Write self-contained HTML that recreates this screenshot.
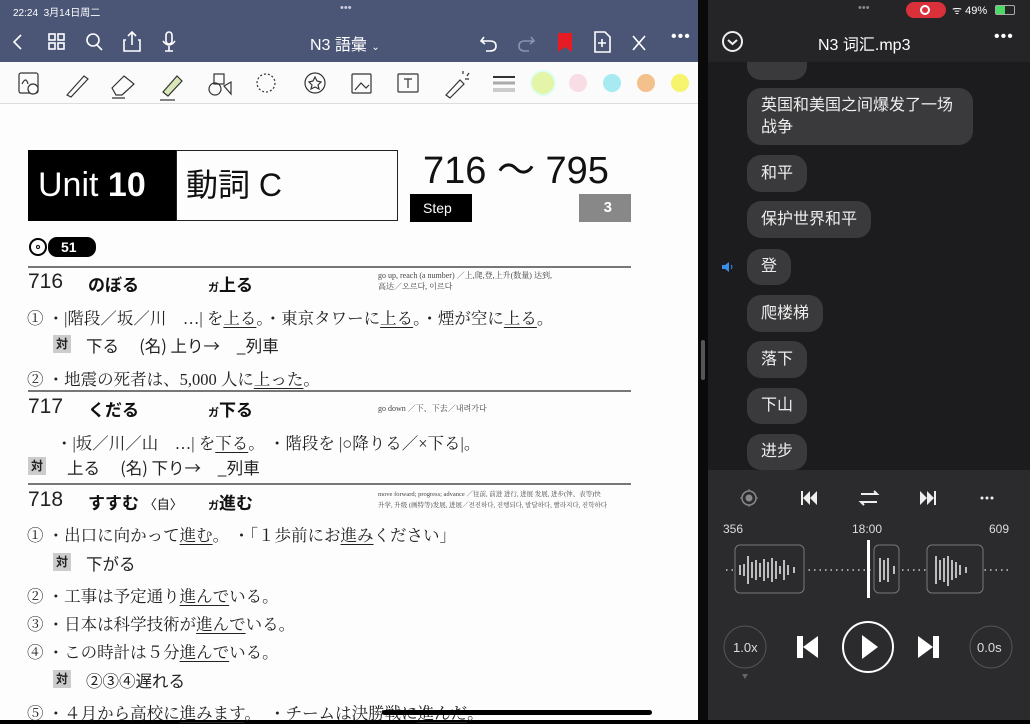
<!DOCTYPE html><html><head><meta charset="utf-8"><style>
*{margin:0;padding:0;box-sizing:border-box}
body{width:1030px;height:720px;overflow:hidden;position:relative;background:#000;font-family:"Liberation Sans","Noto Sans CJK SC",sans-serif}
.a{position:absolute;white-space:nowrap}
.jp{font-family:"Liberation Serif","Noto Serif CJK SC",serif;color:#222;font-size:16.5px}
.bj{font-family:"Liberation Sans","Noto Sans CJK JP",sans-serif;font-weight:bold;font-size:17px;color:#111}
.num{font-family:"Liberation Sans",sans-serif;font-size:21px;color:#222}
.tai{background:#ccc;font-family:"Noto Sans CJK JP",sans-serif;font-weight:bold;font-size:12px;width:18px;height:18px;text-align:center;line-height:18px;color:#222}
.rule{position:absolute;left:28px;width:603px;height:2px;background:#777}
.small{font-family:"Liberation Serif","Noto Serif CJK SC",serif;font-size:8px;color:#444;line-height:11px}
.b{position:absolute;left:747px;background:#3a3a3c;border-radius:14px;color:#eee;font-size:16px;padding:0 14px;line-height:22px}
u{text-decoration:underline;text-underline-offset:3px}
</style></head><body>
<div class="a" style="left:0;top:0;width:698px;height:62px;background:#4b5677"></div>
<div class="a" style="left:13px;top:4px;color:#fff;font-size:10px">22:24&nbsp; 3月14日周二</div>
<div class="a" style="left:340px;top:2px;color:#ccd;font-size:11px">•••</div>
<svg class="a" style="left:0;top:28px" width="698" height="28" stroke="#fff" fill="none" stroke-width="1.6">
<path d="M21 7 L14 14 L21 21"/>
<rect x="49" y="6" width="6" height="6"/><rect x="58" y="6" width="6" height="6"/><rect x="49" y="15" width="6" height="6"/><rect x="58" y="15" width="6" height="6"/>
<circle cx="93" cy="12" r="6"/><path d="M97 17 L102 22"/>
<path d="M126 12 H124 V23 H140 V12 H138 M132 17 V4 M128 8 L132 4 L136 8"/>
<rect x="166" y="4" width="6" height="12" rx="3"/><path d="M163 13 Q169 21 175 13 M169 18 V23 M165 23 H173"/>
<path d="M484 9 L481 13 L485 16 M481 13 H490 Q496 13 496 18 Q496 23 490 23 H486"/>
<path d="M531 9 L534 13 L530 16 M534 13 H525 Q519 13 519 18 Q519 23 525 23 H529" stroke="#8a93ad"/>
<path d="M558 5 H572 V24 L565 19 L558 24 Z" fill="#e51c23" stroke="none"/>
<path d="M595 4 H605 L610 9 V24 H595 Z M602 11 V19 M598 15 H606"/>
<path d="M633 8 L645 22 M645 8 L633 22"/>
</svg>
<div class="a" style="left:671px;top:28px;color:#fff;font-size:16px;letter-spacing:1px">•••</div>
<div class="a" style="left:310px;top:31px;color:#fff;font-size:16px;font-family:'Liberation Sans','Noto Sans CJK JP',sans-serif">N3 語彙 <span style="font-size:10px">⌄</span></div>
<div class="a" style="left:0;top:62px;width:698px;height:42px;background:#fbfbfb;border-bottom:1px solid #ddd"></div>
<svg class="a" style="left:0;top:62px" width="698" height="42" stroke="#333" fill="none" stroke-width="1.2">
<rect x="19" y="11" width="19" height="20" rx="2"/><circle cx="33" cy="27" r="5" fill="#fff"/><path d="M22 22 Q26 14 28 22"/>
<path d="M67 33 L84 14 L88 17 L71 35 Z"/>
<path d="M112 26 L124 14 L134 22 L122 33 H116 Z M112 36 H125"/>
<path d="M163 30 L177 14 L182 19 L168 34 Z" fill="#d8e8b8"/><path d="M160 38 H175"/>
<rect x="214" y="12" width="10" height="10"/><circle cx="215" cy="27" r="6"/><path d="M224 24 L231 20 V32 Z"/>
<circle cx="266" cy="21" r="9" stroke-dasharray="2 2"/>
<circle cx="315" cy="21" r="10"/><path d="M315 15 L317 19 L321 20 L318 23 L319 27 L315 25 L311 27 L312 23 L309 20 L313 19 Z"/>
<rect x="352" y="12" width="19" height="19" rx="1"/><path d="M355 28 L361 21 L366 26 L369 23"/>
<rect x="398" y="12" width="20" height="18" rx="1"/><path d="M404 17 H412 M408 17 V26"/>
<path d="M446 33 L460 18 L464 22 L450 36 Z"/><path d="M463 12 V9 M467 14 L469 11 M465 17 H469"/>
<path d="M493 15 H515" stroke="#333" stroke-width="2"/><path d="M493 21 H515" stroke="#aaa" stroke-width="3"/><path d="M493 28 H515" stroke="#ccc" stroke-width="4"/>
</svg>
<div class="a" style="left:532px;top:72px;width:22px;height:22px;border-radius:50%;background:#e4f4a8;box-shadow:0 0 0 2px #dfe"></div>
<div class="a" style="left:569px;top:74px;width:18px;height:18px;border-radius:50%;background:#f9dde4"></div>
<div class="a" style="left:603px;top:74px;width:18px;height:18px;border-radius:50%;background:#a8eaf2"></div>
<div class="a" style="left:637px;top:74px;width:18px;height:18px;border-radius:50%;background:#f4c08c"></div>
<div class="a" style="left:671px;top:74px;width:18px;height:18px;border-radius:50%;background:#f6f36c"></div>
<div class="a" style="left:0;top:104px;width:698px;height:616px;background:#fdfdfd"></div>
<div class="a" style="left:28px;top:150px;width:148px;height:71px;background:#000;color:#fff;font-size:34px;line-height:71px;padding-left:10px">Unit <b>10</b></div>
<div class="a" style="left:176px;top:150px;width:222px;height:71px;border:1px solid #222;font-size:32px;line-height:69px;padding-left:9px;font-family:'Liberation Sans','Noto Sans CJK JP',sans-serif;color:#111">動詞 C</div>
<div class="a" style="left:423px;top:150px;font-size:38px;line-height:42px;color:#111">716 〜 795</div>
<div class="a" style="left:410px;top:194px;width:62px;height:28px;background:#000;color:#fff;font-size:14px;line-height:28px;padding-left:13px">Step</div>
<div class="a" style="left:579px;top:194px;width:52px;height:28px;background:#888;color:#fff;font-size:15px;font-weight:bold;line-height:28px;text-align:right;padding-right:19px">3</div>
<div class="a" style="left:29px;top:238px;width:18px;height:18px;border:2px solid #000;border-radius:50%"></div>
<div class="a" style="left:36px;top:245px;width:4px;height:4px;border:1px solid #000;border-radius:50%"></div>
<div class="a" style="left:48px;top:237px;width:48px;height:20px;background:#000;border-radius:9px;color:#fff;font-size:14px;font-weight:bold;line-height:20px;padding-left:13px">51</div>

<div class="rule" style="top:266px"></div>
<div class="a num" style="left:28px;top:270px">716</div>
<div class="a bj" style="left:88px;top:271px">のぼる</div>
<div class="a bj" style="left:208px;top:271px"><span style="font-size:11px">ガ</span>上る</div>
<div class="a small" style="left:378px;top:270px">go up, reach (a number) ／上,爬,登,上升(数量) 达到,<br>高达／오르다, 이르다</div>
<div class="a jp" style="left:27px;top:305px">① ・|階段／坂／川　…| を<u>上る</u>。・東京タワーに<u>上る</u>。・煙が空に<u>上る</u>。</div>
<div class="a tai" style="left:53px;top:335px">対</div>
<div class="a jp" style="left:86px;top:333px;font-family:'Noto Sans CJK JP',sans-serif">下る　 (名) 上り→　_列車</div>
<div class="a jp" style="left:27px;top:366px">② ・地震の死者は、5,000 人に<u>上った</u>。</div>

<div class="rule" style="top:390px"></div>
<div class="a num" style="left:28px;top:395px">717</div>
<div class="a bj" style="left:88px;top:396px">くだる</div>
<div class="a bj" style="left:208px;top:396px"><span style="font-size:11px">ガ</span>下る</div>
<div class="a small" style="left:378px;top:403px">go down ／下、下去／내려가다</div>
<div class="a jp" style="left:56px;top:430px">・|坂／川／山　…| を<u>下る</u>。 ・階段を |○降りる／×下る|。</div>
<div class="a tai" style="left:28px;top:457px">対</div>
<div class="a jp" style="left:67px;top:455px;font-family:'Noto Sans CJK JP',sans-serif">上る　 (名) 下り→　_列車</div>

<div class="rule" style="top:483px"></div>
<div class="a num" style="left:28px;top:488px">718</div>
<div class="a bj" style="left:88px;top:489px">すすむ <span style="font-weight:normal;font-size:13px">〈自〉</span></div>
<div class="a bj" style="left:208px;top:489px"><span style="font-size:11px">ガ</span>進む</div>
<div class="a small" style="left:378px;top:489px;font-size:6.5px">move forward; progress; advance ／往前, 前进 进行, 进展 发展, 进步(钟、表等)快<br>升学, 升级 (画特等)发展, 进展／전진하다, 진행되다, 발달하다, 빨라지다, 진학하다</div>
<div class="a jp" style="left:27px;top:522px">① ・出口に向かって<u>進む</u>。 ・「１歩前にお<u>進み</u>ください」</div>
<div class="a tai" style="left:53px;top:553px">対</div>
<div class="a jp" style="left:86px;top:551px;font-family:'Noto Sans CJK JP',sans-serif">下がる</div>
<div class="a jp" style="left:27px;top:583px">② ・工事は予定通り<u>進んで</u>いる。</div>
<div class="a jp" style="left:27px;top:611px">③ ・日本は科学技術が<u>進んで</u>いる。</div>
<div class="a jp" style="left:27px;top:639px">④ ・この時計は５分<u>進んで</u>いる。</div>
<div class="a tai" style="left:53px;top:670px">対</div>
<div class="a jp" style="left:86px;top:668px;font-family:'Noto Sans CJK JP',sans-serif">②③④遅れる</div>
<div class="a jp" style="left:27px;top:700px">⑤ ・４月から高校に<u>進みます</u>。　・チームは決勝戦に<u>進んだ</u>。</div>
<div class="a" style="left:382px;top:710px;width:270px;height:5px;background:#000;border-radius:3px"></div>

<div class="a" style="left:698px;top:0;width:10px;height:720px;background:#0a0a0a"></div>
<div class="a" style="left:701px;top:340px;width:4px;height:40px;background:#555;border-radius:2px"></div>

<div class="a" style="left:708px;top:0;width:322px;height:470px;background:#1c1c1e"></div>
<div class="a" style="left:708px;top:0;width:322px;height:62px;background:#252527"></div>
<div class="a" style="left:858px;top:2px;color:#888;font-size:11px">•••</div>
<div class="a" style="left:906px;top:2px;width:40px;height:16px;background:#d9303a;border-radius:8px"></div>
<div class="a" style="left:920px;top:5px;width:10px;height:10px;border:2px solid #fff;border-radius:50%"></div>
<div class="a" style="left:952px;top:3px;color:#fff;font-size:11px">ᯤ 49%</div>
<div class="a" style="left:995px;top:5px;width:20px;height:10px;border:1px solid #aaa;border-radius:2px"><div style="width:9px;height:8px;background:#4cd964"></div></div>
<div class="a" style="left:722px;top:31px;width:21px;height:21px;border:2px solid #eee;border-radius:50%"></div>
<svg class="a" style="left:722px;top:31px" width="21" height="21"><path d="M6 9 L10.5 13 L15 9" stroke="#eee" stroke-width="2" fill="none"/></svg>
<div class="a" style="left:818px;top:31px;color:#fff;font-size:16px">N3 词汇.mp3</div>
<div class="a" style="left:994px;top:28px;color:#fff;font-size:16px;letter-spacing:1px">•••</div>
<div class="b" style="top:62px;height:18px;border-radius:0 0 14px 14px;width:60px"></div>
<div class="b" style="top:88px;height:57px;padding-top:7px;width:226px">英国和美国之间爆发了一场<br>战争</div>
<div class="b" style="top:155px;height:37px;line-height:37px">和平</div>
<div class="b" style="top:201px;height:37px;line-height:37px">保护世界和平</div>
<svg class="a" style="left:721px;top:261px" width="14" height="12"><path d="M1 4 H4 L8 1 V11 L4 8 H1 Z" fill="#3a8ee6"/><path d="M10 4 Q12 6 10 8" stroke="#3a8ee6" fill="none"/></svg>
<div class="b" style="top:249px;height:36px;line-height:36px">登</div>
<div class="b" style="top:295px;height:37px;line-height:37px">爬楼梯</div>
<div class="b" style="top:341px;height:37px;line-height:37px">落下</div>
<div class="b" style="top:388px;height:36px;line-height:36px">下山</div>
<div class="b" style="top:434px;height:36px;line-height:36px">进步</div>
<div class="a" style="left:708px;top:470px;width:322px;height:250px;background:#2b2b2d"></div>
<svg class="a" style="left:708px;top:470px" width="322" height="250">
<circle cx="41" cy="28" r="7" stroke="#888" stroke-width="1.5" fill="none"/><circle cx="41" cy="28" r="3.5" fill="#888"/><path d="M41 19 V21 M41 35 V37 M32 28 H34 M48 28 H50" stroke="#888"/>
<path d="M93 21 V35 H95 V21 Z M95 28 L102 21 V35 Z M102 28 L109 21 V35 Z" fill="#eee"/>
<path d="M153 24 H169 L166 21 M169 32 H153 L156 35" stroke="#eee" stroke-width="2" fill="none"/>
<path d="M212 21 L219 28 L212 35 Z M219 21 L226 28 L219 35 Z M226 21 H228 V35 H226 Z" fill="#eee"/>
<circle cx="274" cy="28" r="1.5" fill="#eee"/><circle cx="279" cy="28" r="1.5" fill="#eee"/><circle cx="284" cy="28" r="1.5" fill="#eee"/>
<path d="M18 100 H304" stroke="#ccc" stroke-width="1.5" stroke-dasharray="1.5 4"/>
<rect x="27" y="75" width="69" height="48" rx="5" fill="#2b2b2d" stroke="#777"/>
<rect x="166" y="75" width="25" height="48" rx="5" fill="#2b2b2d" stroke="#777"/>
<rect x="219" y="75" width="56" height="48" rx="5" fill="#2b2b2d" stroke="#777"/>
<g stroke="#eee" stroke-width="1.5">
<path d="M32 95 V105 M36 94 V106 M40 86 V114 M44 92 V108 M48 90 V110 M52 93 V107 M56 89 V111 M60 92 V108 M64 88 V112 M68 91 V109 M72 96 V104 M76 90 V110 M80 95 V105 M86 97 V103"/>
<path d="M172 88 V112 M176 90 V110 M180 88 V112 M186 96 V104"/>
<path d="M228 86 V114 M232 90 V110 M236 88 V112 M240 86 V116 M244 90 V110 M248 92 V108 M252 95 V105 M258 97 V103"/>
</g>
<rect x="159" y="70" width="3" height="58" fill="#fff"/>
<circle cx="37" cy="177" r="21" stroke="#555" fill="none"/>
<path d="M89 166 H95 V188 H89 Z M95 177 L110 166 V188 Z" fill="#fff"/>
<circle cx="160" cy="177" r="25" stroke="#fff" stroke-width="2" fill="none"/>
<path d="M154 165 L170 177 L154 189 Z" fill="#fff"/>
<path d="M210 166 L225 177 L210 188 Z M225 166 H231 V188 H225 Z" fill="#fff"/>
<circle cx="283" cy="177" r="21" stroke="#555" fill="none"/>
<path d="M34 204 H40 L37 209 Z" fill="#666"/>
</svg>
<div class="a" style="left:723px;top:522px;color:#ddd;font-size:12px">356</div>
<div class="a" style="left:852px;top:522px;color:#ddd;font-size:12px">18:00</div>
<div class="a" style="left:989px;top:522px;color:#ddd;font-size:12px">609</div>
<div class="a" style="left:733px;top:640px;color:#ddd;font-size:13px">1.0x</div>
<div class="a" style="left:977px;top:640px;color:#ddd;font-size:13px">0.0s</div>
</body></html>
